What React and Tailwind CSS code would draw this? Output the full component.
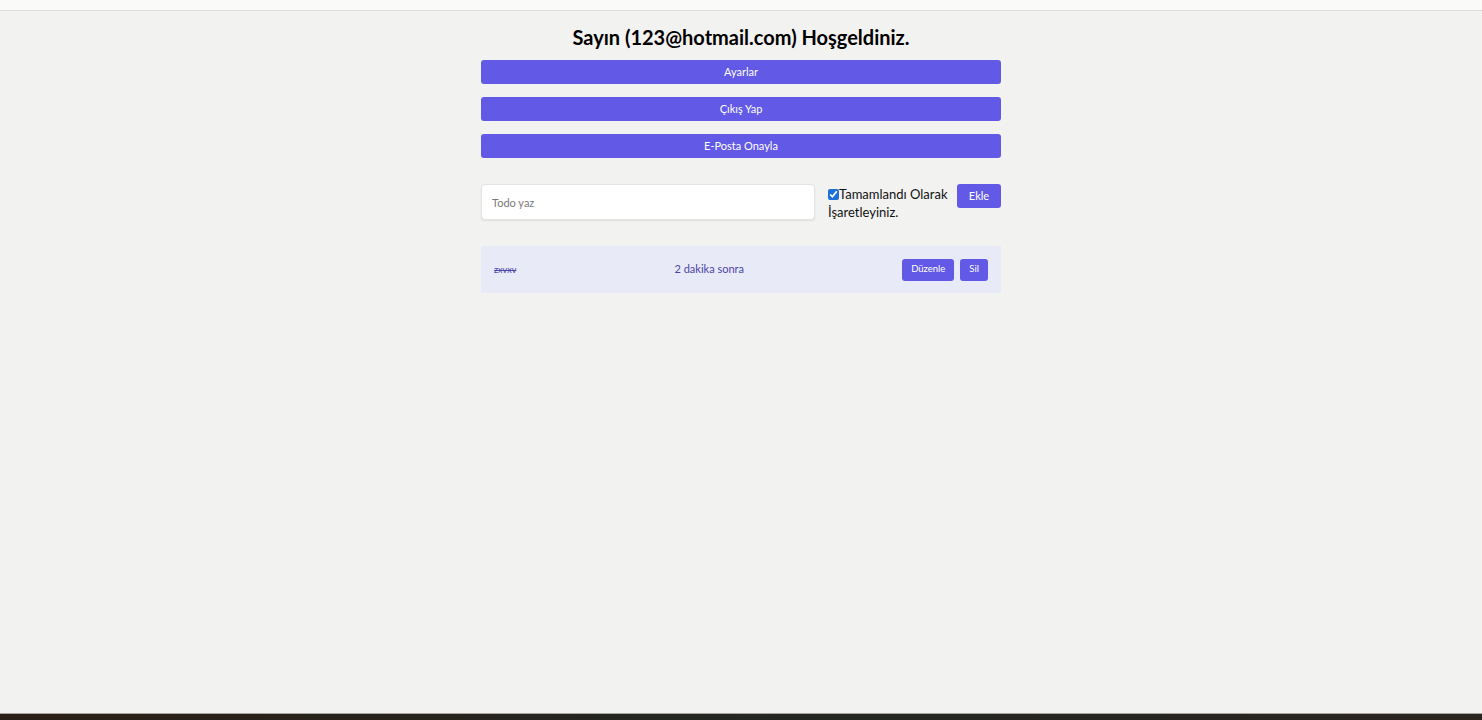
import React from "react";

export default function App() {
  return (
    <div className="h-[720px] w-full flex flex-col overflow-hidden bg-[#f2f2f1]" style={{ fontFamily: 'Lato, "Noto Sans", sans-serif' }}>
      <div className="h-[11px] shrink-0 bg-[#fafaf9] border-b border-[#dddddc]" />
      <main className="flex-1 flex justify-center">
        <div className="w-[520px] flex flex-col pt-[12px]">
          <h1 className="text-center text-[20px] leading-[28px] font-bold text-black">
            Sayın (123@hotmail.com) Hoşgeldiniz.
          </h1>
          <div className="mt-[9px] flex flex-col gap-[13px]">
            {["Ayarlar", "Çıkış Yap", "E-Posta Onayla"].map((t) => (
              <button key={t} className="h-[24px] w-full rounded-[3px] bg-[#625ae6] text-white text-[11px] leading-[24px]">
                {t}
              </button>
            ))}
          </div>
          <div className="mt-[26px] flex items-start">
            <input
              placeholder="Todo yaz"
              className="w-[334px] h-[36px] rounded-[4px] bg-white border border-[#e3e3e3] shadow-[0_1px_2px_rgba(0,0,0,0.08)] px-[10px] text-[11px] placeholder:text-[#7a7a7a] outline-none"
            />
            <label className="ml-[13px] mt-[1px] w-[123px] text-[13px] leading-[18px] text-[#111]">
              <input type="checkbox" defaultChecked className="w-[11px] h-[11px] m-0 align-[-1px] accent-[#1e6fd9]" />
              Tamamlandı Olarak İşaretleyiniz.
            </label>
            <button className="ml-auto w-[44px] h-[24px] rounded-[3px] bg-[#625ae6] text-white text-[11px]">
              Ekle
            </button>
          </div>
          <div className="mt-[25px] h-[47px] bg-[#e9eaf8] px-[13px] flex items-center justify-between">
            <span className="text-[9px] line-through text-[#4b45a8]">zxvxv</span>
            <span className="text-[11px] text-[#4b45a8]">2 dakika sonra</span>
            <div className="flex gap-[6px]">
              <button className="h-[22px] px-[9px] rounded-[3px] bg-[#625ae6] text-white text-[9.5px]">Düzenle</button>
              <button className="h-[22px] px-[9px] rounded-[3px] bg-[#625ae6] text-white text-[9.5px]">Sil</button>
            </div>
          </div>
        </div>
      </main>
      <div className="h-[7px] shrink-0 border-t border-[#a9a59e] bg-gradient-to-r from-[#2a1f16] via-[#232621] to-[#2a241e]" />
    </div>
  );
}
